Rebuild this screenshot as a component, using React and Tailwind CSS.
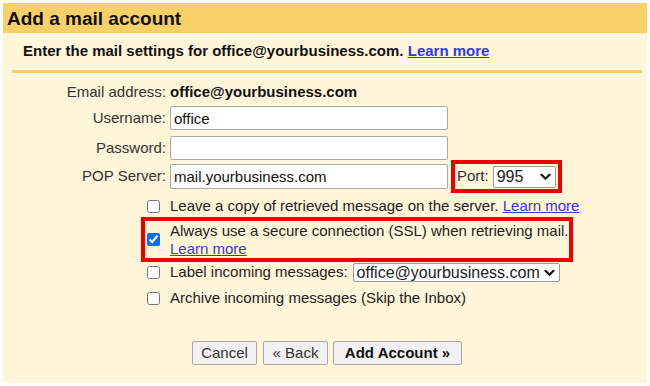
import { useState } from "react";

const Chevron = () => (
  <svg width="11" height="8" viewBox="0 0 11 8" className="shrink-0">
    <path d="M1.5 1.8l4 4 4-4" fill="none" stroke="#111" strokeWidth="2.2" strokeLinecap="round" strokeLinejoin="round" />
  </svg>
);

const SelectBox = ({ value, className }) => (
  <div className={`relative flex items-center border border-[#9a9a9a] rounded-[2px] bg-white ${className}`}>
    <select
      defaultValue={value}
      className="appearance-none w-full h-full pl-[3px] pr-[18px] text-[16px] leading-none text-[#222] bg-transparent outline-none"
    >
      <option>{value}</option>
    </select>
    <div className="absolute right-[4px] top-1/2 -translate-y-1/2 pointer-events-none">
      <Chevron />
    </div>
  </div>
);

const Field = ({ label, children, className = "h-[24px]" }) => (
  <div className={`flex items-center ${className}`}>
    <div className="w-[163px] text-right text-[15px] text-[#333]">{label}</div>
    <div className="ml-[4px] flex items-center">{children}</div>
  </div>
);

const TextInput = ({ value, className = "h-[24px]" }) => (
  <input
    type="text"
    defaultValue={value}
    className={`w-[278px] ${className} border border-[#a9a9a9] rounded-[2px] bg-white px-[3px] text-[15px] text-[#111] outline-none`}
  />
);

const Check = ({ checked }) => {
  const [on, setOn] = useState(checked);
  return (
    <input
      type="checkbox"
      checked={on}
      onChange={() => setOn(!on)}
      className="m-0 w-[13px] h-[13px] shrink-0 accent-[#0b6cf0]"
    />
  );
};

const linkCls = "text-[#3535ee] underline";

export default function App() {
  return (
    <div
      className="w-[650px] h-[386px] bg-white p-[3px]"
      style={{ fontFamily: '"Liberation Sans", Arial, sans-serif' }}
    >
      <div className="h-full bg-[#fff5d9] flex flex-col">
        <div className="h-[30px] bg-[#f9d068] flex items-center pl-[4px]">
          <h1 className="text-[19px] font-bold text-[#111] leading-none">Add a mail account</h1>
        </div>

        <div className="mt-[9px] pl-[20px] h-[18px] text-[15px] leading-[18px] font-bold text-[#111]">
          Enter the mail settings for office@yourbusiness.com.{" "}
          <a href="#" className={linkCls}>Learn more</a>
        </div>

        <div className="mt-[10px] ml-[9px] mr-[5px] h-[3px] bg-[#f9d068]" />

        <div className="mt-[8px] flex flex-col">
          <Field label="Email address:" className="h-[22px]">
            <span className="text-[15px] font-bold text-[#111]">office@yourbusiness.com</span>
          </Field>

          <div className="mt-[3px]">
            <Field label="Username:">
              <TextInput value="office" />
            </Field>
          </div>

          <div className="mt-[6px]">
            <Field label="Password:">
              <input
                type="password"
                className="w-[278px] h-[24px] border border-[#a9a9a9] rounded-[2px] bg-white px-[3px] text-[15px] outline-none"
              />
            </Field>
          </div>

          <Field label="POP Server:" className="h-[33px]">
            <TextInput value="mail.yourbusiness.com" className="h-[25px]" />
            <div className="ml-[3px] h-[33px] border-[4px] border-[#ee0000] flex items-center pl-[2px] pr-[2px]">
              <span className="text-[15px] text-[#333]">Port:</span>
              <SelectBox value="995" className="ml-[4px] w-[63px] h-[22px]" />
            </div>
          </Field>

          <div className="ml-[138px] mt-[3px] flex flex-col text-[15px] text-[#222]">
            <label className="h-[20px] pl-[6px] flex items-center gap-[10px]">
              <Check />
              <span>
                Leave a copy of retrieved message on the server.{" "}
                <a href="#" className={linkCls}>Learn more</a>
              </span>
            </label>

            <label className="mt-[1px] w-[432px] h-[45px] border-[4px] border-[#ee0000] pl-[2px] flex items-center gap-[10px]">
              <Check checked />
              <span className="leading-[18px]">
                Always use a secure connection (SSL) when retrieving mail.
                <br />
                <a href="#" className={linkCls}>Learn more</a>
              </span>
            </label>

            <div className="mt-[1px] h-[19px] pl-[6px] flex items-center">
              <Check />
              <span className="ml-[10px]">Label incoming messages:</span>
              <SelectBox value="office@yourbusiness.com" className="ml-[5px] w-[207px] h-[19px]" />
            </div>

            <label className="mt-[6px] h-[20px] pl-[6px] flex items-center gap-[10px]">
              <Check />
              <span>Archive incoming messages (Skip the Inbox)</span>
            </label>
          </div>

          <div className="mt-[33px] ml-[189px] flex items-center text-[15px]">
            <button className="w-[65px] h-[24px] border border-[#a8a8a8] rounded-[2px] bg-[#f1f1f1] text-[#333]">
              Cancel
            </button>
            <button className="ml-[6px] w-[65px] h-[24px] border border-[#a8a8a8] rounded-[2px] bg-[#f1f1f1] text-[#333]">
              « Back
            </button>
            <button className="ml-[5px] w-[129px] h-[24px] border border-[#a8a8a8] rounded-[2px] bg-[#f1f1f1] font-bold text-[#111]">
              Add Account »
            </button>
          </div>
        </div>
      </div>
    </div>
  );
}
